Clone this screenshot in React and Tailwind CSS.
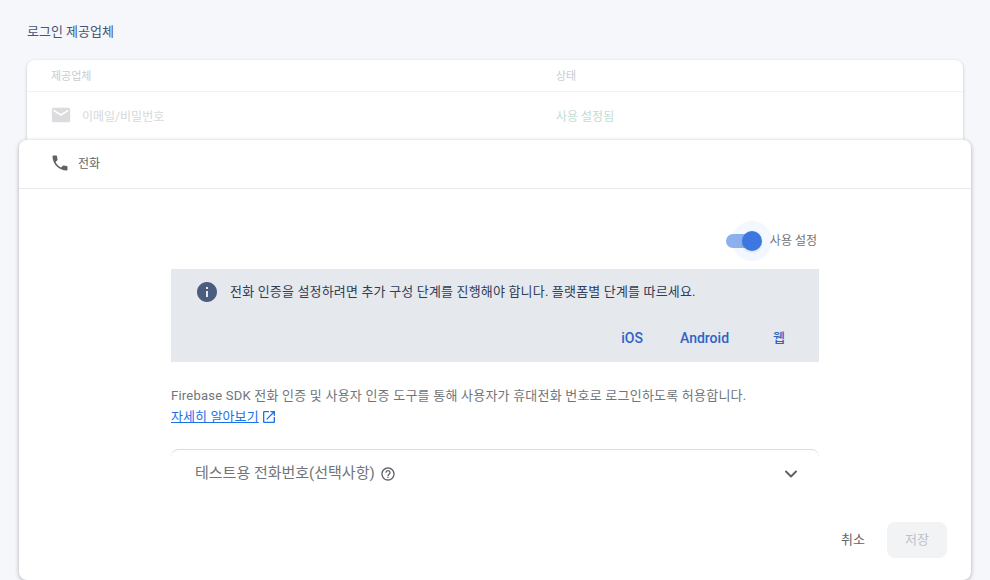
import { ChevronDown } from 'lucide-react';

const fontStack = "font-['Roboto','Noto_Sans_CJK_KR',sans-serif]";

function MailIcon() {
  return (
    <svg width="22" height="22" viewBox="0 0 24 24" fill="#dadce0">
      <path d="M20 4H4c-1.1 0-2 .9-2 2v12c0 1.1.9 2 2 2h16c1.1 0 2-.9 2-2V6c0-1.1-.9-2-2-2zm0 4l-8 5-8-5V6l8 5 8-5v2z" />
    </svg>
  );
}

function PhoneIcon() {
  return (
    <svg width="20" height="20" viewBox="0 0 24 24" fill="#5f6368">
      <path d="M6.62 10.79c1.44 2.83 3.76 5.14 6.59 6.59l2.2-2.2c.27-.27.67-.36 1.02-.24 1.12.37 2.33.57 3.57.57.55 0 1 .45 1 1V20c0 .55-.45 1-1 1-9.39 0-17-7.61-17-17 0-.55.45-1 1-1h3.5c.55 0 1 .45 1 1 0 1.25.2 2.45.57 3.57.11.35.03.74-.25 1.02l-2.2 2.2z" />
    </svg>
  );
}

function InfoIcon() {
  return (
    <svg width="24" height="24" viewBox="0 0 24 24" fill="#4a5d7e">
      <path d="M12 2C6.48 2 2 6.48 2 12s4.48 10 10 10 10-4.48 10-10S17.52 2 12 2zm1 15h-2v-6h2v6zm0-8h-2V7h2v2z" />
    </svg>
  );
}

function OpenIcon() {
  return (
    <svg width="16" height="16" viewBox="0 0 24 24" fill="#1a73e8">
      <path d="M19 19H5V5h7V3H5c-1.11 0-2 .9-2 2v14c0 1.1.89 2 2 2h14c1.1 0 2-.9 2-2v-7h-2v7zM14 3v2h3.59l-9.83 9.83 1.41 1.41L19 6.41V10h2V3h-7z" />
    </svg>
  );
}

function HelpIcon() {
  return (
    <svg width="16" height="16" viewBox="0 0 24 24" fill="#5f6368">
      <path d="M11 18h2v-2h-2v2zm1-16C6.48 2 2 6.48 2 12s4.48 10 10 10 10-4.48 10-10S17.52 2 12 2zm0 18c-4.41 0-8-3.59-8-8s3.59-8 8-8 8 3.59 8 8-3.59 8-8 8zm0-14c-2.21 0-4 1.79-4 4h2c0-1.1.9-2 2-2s2 .9 2 2c0 2-3 1.75-3 5h2c0-2.25 3-2.5 3-5 0-2.21-1.79-4-4-4z" />
    </svg>
  );
}

export default function App() {
  return (
    <div className={`${fontStack} h-[580px] w-[990px] overflow-hidden bg-[#f6f7fa]`}>
      <div className="flex h-[60px] items-center pt-[4px] pl-[27px] text-[13px] text-[#42557a]">
        로그인 제공업체
      </div>

      <div className="mx-[27px] h-[80px] rounded-t-lg bg-white shadow-[0_1px_3px_rgba(60,64,67,0.3)]">
        <div className="grid h-[32px] grid-cols-[505px_1fr] items-center border-b border-[#f1f3f4] pt-[3px] pl-6 text-[11px] text-[#c9cccf]">
          <span>제공업체</span>
          <span>상태</span>
        </div>
        <div className="grid h-[48px] grid-cols-[505px_1fr] items-center pt-[2px] pl-6 text-[12px]">
          <div className="-ml-[1px] flex items-center gap-[10px] text-[#d6d8da]">
            <span className="mb-[5px]">
              <MailIcon />
            </span>
            <span>이메일/비밀번호</span>
          </div>
          <span className="text-[#c2dcd5]">사용 설정됨</span>
        </div>
      </div>

      <div className="relative mx-[19px] h-[440px] rounded-lg bg-white shadow-[0_1px_4px_rgba(60,64,67,0.4)]">
        <div className="flex h-[49px] items-center gap-[8px] border-b border-[#e8eaed] pl-[31px] text-[12px] text-[#5f6368]">
          <span className="mb-[3px]">
            <PhoneIcon />
          </span>
          <span>전화</span>
        </div>

        <div className="mx-[152px]">
          <div className="flex h-[80px] items-center justify-end gap-[12px] pt-[24px] pr-[1px] text-[12px] text-[#70757a]">
            <div className="relative -left-[1px] h-[14px] w-[32px]">
              <div className="absolute top-[-13px] right-[-14px] h-10 w-10 rounded-full bg-[#f3f7fe]" />
              <div className="absolute inset-0 rounded-full bg-[#8ab1ee]" />
              <div className="absolute top-[-3px] right-[-4px] h-5 w-5 rounded-full bg-[#3c78e0] shadow-sm" />
            </div>
            <span className="relative -left-[1px]">사용 설정</span>
          </div>

          <div className="h-[93px] bg-[#e5e8ed]">
            <div className="flex h-[46px] items-center gap-[11px] pl-6 text-[13px] tracking-[0.17px] text-[#2f3d55]">
              <InfoIcon />
              <span>전화 인증을 설정하려면 추가 구성 단계를 진행해야 합니다. 플랫폼별 단계를 따르세요.</span>
            </div>
            <div className="flex h-[46px] items-center justify-end gap-[37px] pr-[34px] text-[14px] font-medium text-[#2f63c4]">
              <span>iOS</span>
              <span>Android</span>
              <span className="ml-[7px] text-[13px]">웹</span>
            </div>
          </div>

          <p className="mt-[23px] text-[13px] leading-[21px] tracking-[0.22px] text-[#70757a]">
            Firebase SDK 전화 인증 및 사용자 인증 도구를 통해 사용자가 휴대전화 번호로 로그인하도록 허용합니다.
          </p>
          <a className="flex items-center gap-[2px] text-[13px] leading-[21px] tracking-[0.1px] text-[#1a73e8]">
            <span className="underline">자세히 알아보기</span>
            <OpenIcon />
          </a>

          <div className="mt-[22px] flex h-[50px] items-center justify-between rounded-t-lg border-t border-[#dadce0] pb-[2px] pl-6 pr-[18px] text-[#70757a]">
            <div className="flex items-center gap-[5px] text-[15px]">
              <span>테스트용 전화번호(선택사항)</span>
              <HelpIcon />
            </div>
            <ChevronDown size={20} strokeWidth={2.4} color="#5f6368" />
          </div>
        </div>

        <div className="absolute right-6 bottom-[22px] flex items-center gap-[22px] text-[13px]">
          <span className="text-[#5f6368]">취소</span>
          <button className="h-9 w-[60px] rounded-lg bg-[#f1f3f4] text-[#bdc1c6]">저장</button>
        </div>
      </div>
    </div>
  );
}
